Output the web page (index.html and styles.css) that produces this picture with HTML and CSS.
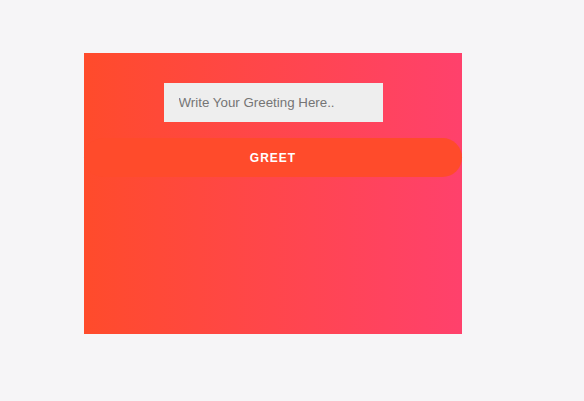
FILE: index.html
```html
<!DOCTYPE html>
<html>
<head>
<meta charset="utf-8">
<link rel="stylesheet" href="styles.css">
</head>
<body>
<div class="page">
  <div class="card">
    <input class="greeting" type="text" placeholder="Write Your Greeting Here..">
    <button class="greet">GREET</button>
  </div>
</div>
</body>
</html>
```
FILE: styles.css
```css
html, body {
  margin: 0;
  padding: 0;
  background: #f6f5f7;
  font-family: "Liberation Sans", Arial, sans-serif;
}
.page {
  padding: 53px 0 0 84px;
}
.card {
  width: 378px;
  height: 281px;
  background: linear-gradient(to right, #ff4b2b, #ff416c);
  display: flex;
  flex-direction: column;
  align-items: center;
  padding-top: 30px;
  box-sizing: border-box;
}
.greeting {
  width: 219px;
  height: 39px;
  box-sizing: border-box;
  border: none;
  background: #eee;
  padding: 0 15px;
  font-family: "Liberation Sans", Arial, sans-serif;
  font-size: 13.333px;
  color: #333;
  outline: none;
}
.greeting::placeholder {
  color: #757575;
}
.greet {
  margin-top: 16px;
  width: 100%;
  height: 39px;
  border: none;
  border-radius: 20px;
  background: #ff4b2b;
  color: #fff;
  font-family: "Liberation Sans", Arial, sans-serif;
  font-size: 12px;
  font-weight: bold;
  letter-spacing: 1px;
  padding: 0;
}
```
